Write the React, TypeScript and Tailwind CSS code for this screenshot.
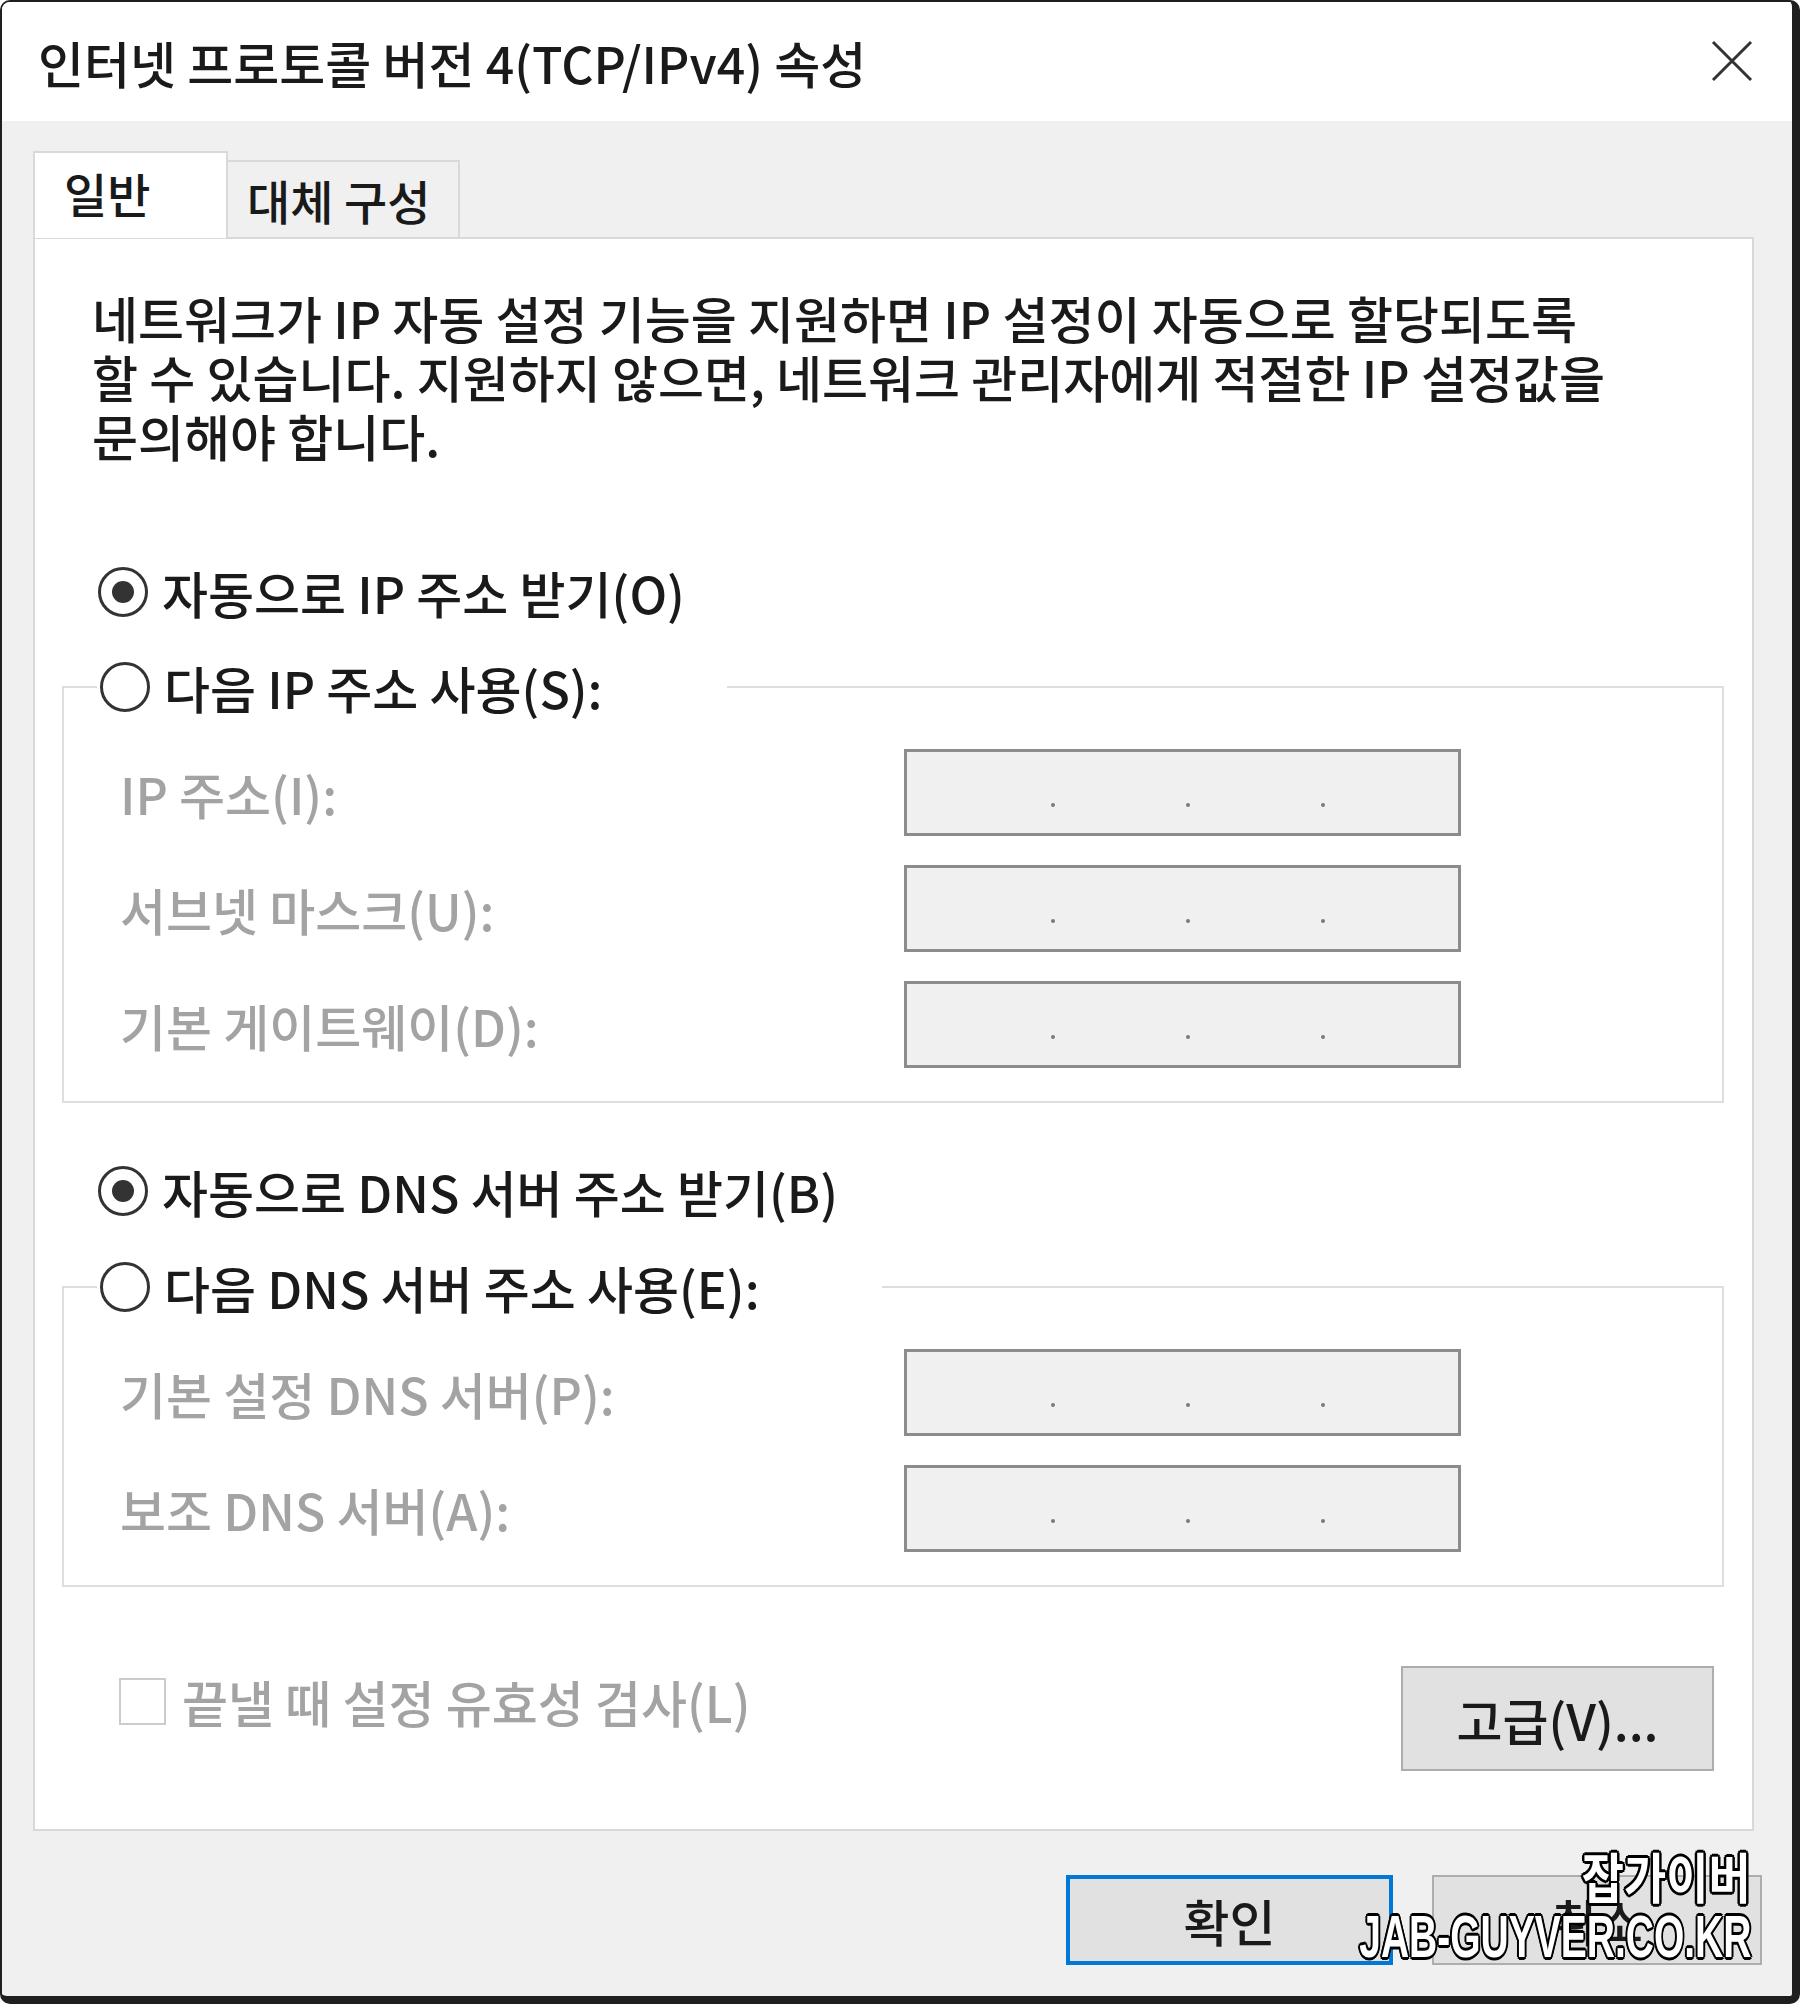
import React from "react";

const FONT = "font-['Noto_Sans_CJK_KR',sans-serif]";

function Radio({ checked }: { checked?: boolean }) {
  return (
    <span className="flex h-[50px] w-[50px] shrink-0 items-center justify-center rounded-full border-[3px] border-[#333333] bg-white">
      {checked && <span className="h-[22px] w-[22px] rounded-full bg-[#333333]" />}
    </span>
  );
}

function RadioRow({ label, checked }: { label: string; checked?: boolean }) {
  return (
    <div className="flex h-[60px] items-center gap-[14px] whitespace-nowrap text-[#1a1a1a]">
      <Radio checked={checked} />
      <span>{label}</span>
    </div>
  );
}

function IpBox() {
  return (
    <div className="flex h-[87px] w-[557px] items-start gap-[131px] border-[3px] border-[#8c8c8c] bg-[#f0f0f0] pl-[144px] pt-[51px]">
      <span className="h-[4px] w-[4px] rounded-full bg-[#7a7a7a]" />
      <span className="h-[4px] w-[4px] rounded-full bg-[#7a7a7a]" />
      <span className="h-[4px] w-[4px] rounded-full bg-[#7a7a7a]" />
    </div>
  );
}

function Field({ label }: { label: string }) {
  return (
    <div className="flex h-[87px] items-center">
      <span className="w-[784px] whitespace-nowrap text-[#a3a3a3]">{label}</span>
      <IpBox />
    </div>
  );
}

function Group({ legend, pr, rows }: { legend: string; pr: string; rows: string[] }) {
  return (
    <fieldset className="ml-[27px] w-[1662px] border-2 border-[#dedede] p-0 pb-[33px]">
      <legend className={`ml-[33px] pl-[3px] ${pr}`}>
        <RadioRow label={legend} />
      </legend>
      <div className="flex flex-col gap-[29px] pl-[56px] pt-[32px]">
        {rows.map((r) => (
          <Field key={r} label={r} />
        ))}
      </div>
    </fieldset>
  );
}

export default function App() {
  return (
    <div className={`h-[2004px] w-[1800px] bg-white ${FONT} text-[50px] font-medium leading-none`}>
      <div className="relative flex h-full w-full flex-col overflow-hidden rounded-[10px] border-b-[8px] border-l-2 border-r-[8px] border-t-2 border-[#1f1f1f] bg-[#f0f0f0]">
        {/* title bar */}
        <div className="flex h-[119px] shrink-0 items-center justify-between bg-white pl-[36px] pr-[38px]">
          <span className="whitespace-nowrap text-[#1a1a1a]">인터넷 프로토콜 버전 4(TCP/IPv4) 속성</span>
          <svg width="44" height="44" viewBox="0 0 44 44" className="mb-[2px]">
            <path d="M3 3 L41 41 M41 3 L3 41" stroke="#333" strokeWidth="3" fill="none" />
          </svg>
        </div>

        <div className="flex flex-1 flex-col pl-[31px] pt-[30px]">
          {/* tabs */}
          <div className="flex h-[86px] items-end text-[47px]">
            <div className="relative z-10 -mb-px flex h-[87px] w-[195px] items-center border-2 border-b-0 border-[#d9d9d9] bg-white pb-[6px] pl-[29px] text-[#1a1a1a]">
              일반
            </div>
            <div className="flex h-[77px] w-[232px] items-center border-2 border-b-0 border-l-0 border-[#d9d9d9] bg-[#f0f0f0] pl-[19px] text-[#1a1a1a]">
              대체 구성
            </div>
          </div>

          {/* panel */}
          <div className="flex h-[1594px] w-[1721px] flex-col border-2 border-[#d9d9d9] bg-white">
            <div className="px-[57px] pt-[49px] leading-[59px] text-[#1a1a1a]">
              <div className="whitespace-nowrap">네트워크가 IP 자동 설정 기능을 지원하면 IP 설정이 자동으로 할당되도록</div>
              <div className="whitespace-nowrap">할 수 있습니다. 지원하지 않으면, 네트워크 관리자에게 적절한 IP 설정값을</div>
              <div className="whitespace-nowrap">문의해야 합니다.</div>
            </div>

            <div className="mt-[97px] pl-[63px]">
              <RadioRow label="자동으로 IP 주소 받기(O)" checked />
            </div>
            <div className="mt-[35px]">
              <Group
                legend="다음 IP 주소 사용(S):"
                pr="pr-[124px]"
                rows={["IP 주소(I):", "서브넷 마스크(U):", "기본 게이트웨이(D):"]}
              />
            </div>

            <div className="mt-[58px] pl-[63px]">
              <RadioRow label="자동으로 DNS 서버 주소 받기(B)" checked />
            </div>
            <div className="mt-[36px]">
              <Group
                legend="다음 DNS 서버 주소 사용(E):"
                pr="pr-[122px]"
                rows={["기본 설정 DNS 서버(P):", "보조 DNS 서버(A):"]}
              />
            </div>

            <div className="mt-[79px] flex items-start justify-between pl-[84px] pr-[38px]">
              <div className="mt-[5px] flex h-[60px] items-center gap-[16px] whitespace-nowrap text-[#a3a3a3]">
                <span className="h-[47px] w-[47px] border-2 border-[#cccccc] bg-white" />
                <span>끝낼 때 설정 유효성 검사(L)</span>
              </div>
              <div className="flex h-[105px] w-[313px] items-center justify-center border-2 border-[#adadad] bg-[#e1e1e1] text-[#1a1a1a]">
                고급(V)...
              </div>
            </div>
          </div>

          {/* dialog buttons */}
          <div className="mt-[44px] flex justify-end gap-[39px] pr-[30px]">
            <div className="flex h-[90px] w-[327px] items-center justify-center border-[4px] border-[#0078d7] bg-[#e1e1e1] text-[#1a1a1a]">
              확인
            </div>
            <div className="flex h-[90px] w-[330px] items-center justify-center border-2 border-[#adadad] bg-[#e1e1e1] text-[#1a1a1a]">
              취소
            </div>
          </div>
        </div>

        {/* watermark */}
        <div className="absolute right-[41px] top-[1844px] flex flex-col items-end font-bold text-white [text-shadow:3px_0_0_#000,-3px_0_0_#000,0_3px_0_#000,0_-3px_0_#000,2px_2px_0_#000,-2px_-2px_0_#000,2px_-2px_0_#000,-2px_2px_0_#000]">
          <span className="origin-right scale-x-[0.85] text-[54px] leading-[60px]">잡가이버</span>
          <span className="origin-right scale-x-[0.65] font-['Liberation_Sans',sans-serif] text-[60px] leading-[62px]">
            JAB-GUYVER.CO.KR
          </span>
        </div>
      </div>
    </div>
  );
}
